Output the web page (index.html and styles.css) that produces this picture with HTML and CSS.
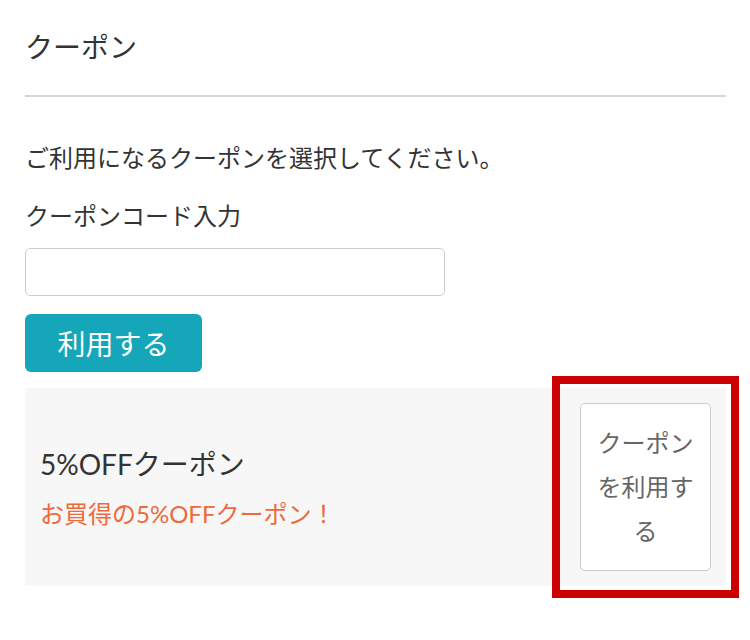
FILE: index.html
```html
<!DOCTYPE html>
<html>
<head>
    <title>クーポン</title>
    <link rel="stylesheet" href="styles.css">
</head>
<body>
    <div class="container">
        <h2 class="title">クーポン</h2>
        <p class="lead">ご利用になるクーポンを選択してください。</p>
        <label class="label" for="code">クーポンコード入力</label>
        <input type="text" id="code" class="code-input">
        <button class="btn-apply">利用する</button>

        <div class="coupon">
            <div class="coupon-info">
                <div class="coupon-name">5%OFFクーポン</div>
                <div class="coupon-desc">お買得の5%OFFクーポン！</div>
            </div>
            <div class="coupon-action">
                <button class="btn-use">クーポンを利用する</button>
            </div>
        </div>
    </div>
</body>
</html>
```

FILE: styles.css
```css
body { margin: 0; background: #fff; color: #333; font-family: Lato, "Noto Sans CJK JP", sans-serif; font-size: 24px; }
.container { padding: 20px 24px 60px 25px; }
.title { margin: 0; padding: 10px 0 31px; font-size: 28px; font-weight: normal; line-height: 34px; border-bottom: 2px solid #d6d6d6; }
.lead { margin: 38px 0 0; line-height: 46px; }
.label { display: block; margin-top: 12px; line-height: 46px; }
.code-input { display: block; box-sizing: border-box; width: 420px; height: 48px; margin-top: 9px; border: 1px solid #ccc; border-radius: 5px; font-size: 24px; }
.btn-apply { display: block; margin-top: 18px; width: 177px; height: 58px; padding: 0; background: #16a6b9; color: #fff; border: none; border-radius: 6px; font-family: inherit; font-size: 28px; }
.coupon { display: flex; align-items: center; margin-top: 16px; padding: 15px; background: #f7f7f7; }
.coupon-info { flex: 1; padding-top: 4px; }
.coupon-name { font-size: 28px; line-height: 40px; }
.coupon-desc { color: #ee6a3a; line-height: 40px; margin-top: 10px; }
.coupon-action { position: relative; }
.coupon-action::after { content: ""; position: absolute; top: -27px; left: -28px; right: -28px; bottom: -27px; border: 8px solid #cc0000; }
.btn-use { display: block; box-sizing: border-box; width: 131px; height: 168px; padding: 0 14px; background: #fff; color: #666; border: 1px solid #ccc; border-radius: 5px; font-family: inherit; font-size: 24px; line-height: 44px; }
```
